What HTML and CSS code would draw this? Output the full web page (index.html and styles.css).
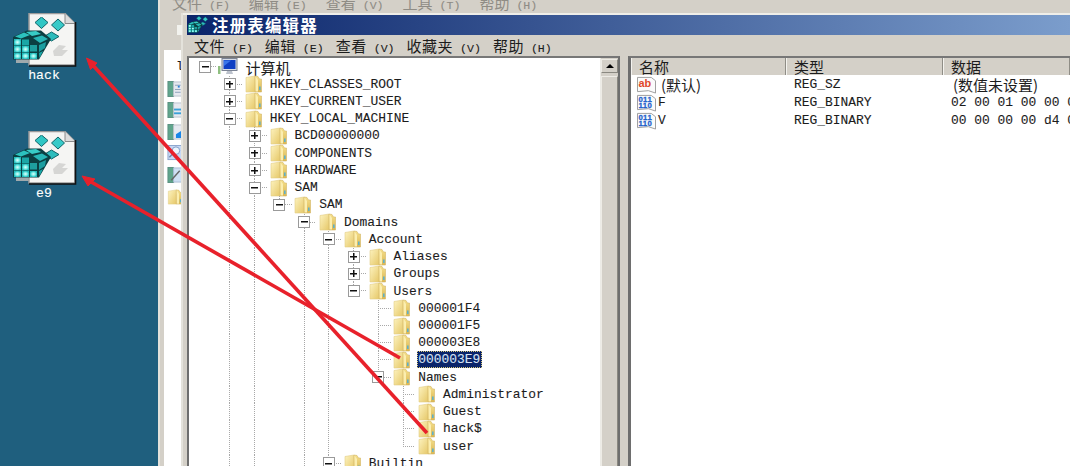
FILE: index.html
```html
<!DOCTYPE html>
<html lang="zh">
<head>
<meta charset="utf-8">
<title>注册表编辑器</title>
<link rel="stylesheet" href="styles.css">
</head>
<body>
<svg class="defs" aria-hidden="true">
  <defs>
    <linearGradient id="fg" x1="0" y1="0" x2="1" y2="1">
      <stop offset="0" stop-color="#fdf3c0"/><stop offset="1" stop-color="#e6c868"/>
    </linearGradient>
    <linearGradient id="fg2" x1="0" y1="0" x2="0" y2="1">
      <stop offset="0" stop-color="#f6e08c"/><stop offset="1" stop-color="#d9b653"/>
    </linearGradient>
    <radialGradient id="cell">
      <stop offset="0" stop-color="#e4fffc"/><stop offset=".6" stop-color="#6fe8e2"/><stop offset="1" stop-color="#22bcbc"/>
    </radialGradient>
    <symbol id="folder" viewBox="0 0 17 18">
      <path d="M1 2.5 L10 1 L10 17 L1 17 Z" fill="url(#fg)" stroke="#e2cd85" stroke-width=".6"/>
      <path d="M10 1 L13 1.5 L14.5 4 L16.5 4 L16.5 17 L10 17 Z" fill="url(#fg2)" stroke="#d3b665" stroke-width=".6"/>
      <path d="M10.5 1.5 L13 5 L13 16.5 L10.5 16.5 Z" fill="#fbeeb0"/>
      <rect x="14" y="11.5" width="1.6" height="3.5" fill="#5fb0c8"/>
    </symbol>
    <symbol id="cubes" viewBox="0 0 52 46">
      <path d="M28.500 0 L35 5.500 L28.500 11.500 L22 5.500 Z" fill="#30c6c4" stroke="#0f6468"/>
      <path d="M45 2 L51.500 8 L45 14 L38.500 8 Z" fill="#38cac8" stroke="#0f6468"/>
      <path d="M38.500 15 L46 19.500 L38.500 24 L31 19.500 Z" fill="#2cbcbc" stroke="#0f6468"/>
      <path d="M0 20 L14 13.500 L28 13.500 L38 22 L26 42.500 L0 42.500 Z" fill="#0b3f42"/>
      <path d="M2 19.500 L11 15.500 L17 18 L8 21.500 Z" fill="#2cc2be"/>
      <path d="M13 15 L23 14 L28 17 L19 19 Z" fill="#38ccc6"/>
      <path d="M20 21 L29 18.500 L35 22 L27 26 Z" fill="#27b6b6"/>
      <rect x="1" y="22" width="7" height="6.500" fill="url(#cell)"/>
      <rect x="9" y="22.500" width="7" height="6" fill="#1ba6a6"/>
      <rect x="1" y="29" width="7" height="6.500" fill="url(#cell)"/>
      <rect x="9" y="29" width="7" height="6.500" fill="url(#cell)"/>
      <rect x="17" y="28" width="7" height="6.500" fill="#1e9e9e"/>
      <rect x="1" y="36" width="7" height="6" fill="url(#cell)"/>
      <rect x="9" y="36" width="7" height="6" fill="url(#cell)"/>
      <rect x="17" y="36" width="7" height="6" fill="url(#cell)"/>
      <path d="M26 28 L33 25 L32 31 L26 35 Z" fill="#1b9ea0"/>
      <path d="M26 36 L30 34 L26.500 41 Z" fill="#1baaaa"/>
    </symbol>
    <symbol id="reg" viewBox="0 0 64 54">
      <path d="M3 46 H17 V50 H3 Z" fill="#9fa9ad"/>
      <path d="M16 .5 H52 L62 10.500 V52 H16 Z" fill="#f5f5f3" stroke="#9a9a9a" stroke-width="1.500"/>
      <path d="M52 .5 V10.500 H62" fill="#dcdcdc" stroke="#8a8a8a"/>
      <path d="M62.500 9 V53 H16" fill="none" stroke="#111" stroke-width="1.600"/>
      <path d="M40 38 L46 32 L53 33 L49 37 L55 37 L49 43 L41 43 Z" fill="#d6d6d4"/>
      <use href="#cubes" x="0" y="4" width="52" height="46"/>
    </symbol>
    <symbol id="computer" viewBox="0 0 20 18">
      <rect x="0" y="8" width="2.500" height="8" fill="#8fbf80"/>
      <rect x="4" y="0.500" width="15" height="12" fill="#d8dde6" stroke="#7c8494"/>
      <rect x="5.500" y="2" width="12" height="9" fill="#0f3fc4"/>
      <path d="M6 2.500 H13 L6 8 Z" fill="#3a76ea"/>
      <path d="M9 13 H14 L15 16 H8 Z" fill="#bcc2cc"/>
    </symbol>
    <symbol id="ab" viewBox="0 0 20 19">
      <path d="M.5 1.500 H15 L19.500 5 V18 L12 15.500 L.5 16.500 Z" fill="#fbfbfb" stroke="#9c9c9c"/>
      <text class="ab-text" x="1.500" y="12">ab</text>
    </symbol>
    <symbol id="bin" viewBox="0 0 20 19">
      <path d="M.5 1.500 H15 L19.500 5 V18 L12 15.500 L.5 16.500 Z" fill="#fbfbfb" stroke="#9c9c9c"/>
      <text class="bin-text" x="1.500" y="8">011</text>
      <text class="bin-text" x="1.500" y="15">110</text>
    </symbol>
    <symbol id="srv1" viewBox="0 0 16 17">
      <rect x=".5" y=".5" width="6" height="16" fill="#5fa58c" stroke="#5a8f80"/>
      <rect x="6.500" y="1" width="9" height="15" fill="#e6e9f0" stroke="#b9c2cc"/>
      <path d="M8 4.500 H14 M8 9 H14 M8 12 H14" stroke="#8aa0b8"/>
      <rect x="11" y="5" width="2" height="2" fill="#2a7ed8"/>
    </symbol>
    <symbol id="srv2" viewBox="0 0 16 17">
      <rect x=".5" y=".5" width="6" height="16" fill="#5fa58c" stroke="#5a8f80"/>
      <rect x="6.500" y="1" width="9" height="15" fill="#e6e9f0" stroke="#b9c2cc"/>
      <rect x="7" y="7" width="8" height="2" fill="#3aa0d8"/>
      <rect x="7" y="11" width="8" height="2" fill="#3aa0d8"/>
    </symbol>
    <symbol id="srv3" viewBox="0 0 16 17">
      <rect x=".5" y=".5" width="6" height="16" fill="#5fa58c" stroke="#5a8f80"/>
      <rect x="6.500" y="1" width="9" height="15" fill="#e6e9f0" stroke="#b9c2cc"/>
      <path d="M9 11 L15 7 V15 H9 Z" fill="#1a86e8"/>
    </symbol>
    <symbol id="srv4" viewBox="0 0 16 17">
      <rect x=".5" y=".5" width="15" height="15" fill="#c6d8f4" stroke="#8aa4cc"/>
      <circle cx="9" cy="6" r="4" fill="#eef4fc" stroke="#7e9cc6"/>
      <path d="M6 9 L2 13" stroke="#6f84a6" stroke-width="1.500"/>
    </symbol>
    <symbol id="srv5" viewBox="0 0 16 17">
      <rect x=".5" y=".5" width="6" height="16" fill="#5fa58c" stroke="#5a8f80"/>
      <rect x="6.500" y="1" width="9" height="15" fill="#cfe0f4" stroke="#a9bcd4"/>
      <path d="M4 14 L13 4" stroke="#666" stroke-width="1.500"/>
    </symbol>
  </defs>
</svg>

<div class="screen">
  <aside class="desktop">
    <div class="deskicon">
      <svg class="regfile"><use href="#reg"/></svg>
      <span class="desklabel">hack</span>
    </div>
    <div class="deskicon">
      <svg class="regfile"><use href="#reg"/></svg>
      <span class="desklabel">e9</span>
    </div>
  </aside>

  <main class="backwin">
    <nav class="backmenu">
      <span class="bm"><span class="zh">文件</span> (F)</span>
      <span class="bm"><span class="zh">编辑</span> (E)</span>
      <span class="bm"><span class="zh">查看</span> (V)</span>
      <span class="bm"><span class="zh">工具</span> (T)</span>
      <span class="bm"><span class="zh">帮助</span> (H)</span>
    </nav>
    <div class="backbody">
      <div class="side">
        <div class="sidetop"><i class="toolglyph"></i></div>
        <div class="sidewhite">
          <span class="sidechar">l</span>
          <svg class="sideico"><use href="#srv1"/></svg>
          <svg class="sideico"><use href="#srv2"/></svg>
          <svg class="sideico"><use href="#srv3"/></svg>
          <svg class="sideico"><use href="#srv4"/></svg>
          <svg class="sideico"><use href="#srv5"/></svg>
          <svg class="sideico"><use href="#folder"/></svg>
        </div>
      </div>

      <section class="regedit">
        <header class="titlebar">
          <svg class="titleico"><use href="#cubes"/></svg>
          <span class="titletext">注册表编辑器</span>
        </header>
        <nav class="menubar">
          <span class="mi"><span class="zh">文件</span> (F)</span>
          <span class="mi"><span class="zh">编辑</span> (E)</span>
          <span class="mi"><span class="zh">查看</span> (V)</span>
          <span class="mi"><span class="zh">收藏夹</span> (V)</span>
          <span class="mi"><span class="zh">帮助</span> (H)</span>
        </nav>
        <div class="panes">
          <div class="treebox">
            <div class="tree">
              <div class="row"><i class="c h"><b class="x m"></b></i><svg class="ico comp"><use href="#computer"/></svg><span class="lbl root zh">计算机</span></div>
              <div class="row"><i class="c"></i><i class="c t"><b class="x p"></b></i><svg class="ico"><use href="#folder"/></svg><span class="lbl">HKEY_CLASSES_ROOT</span></div>
              <div class="row"><i class="c"></i><i class="c t"><b class="x p"></b></i><svg class="ico"><use href="#folder"/></svg><span class="lbl">HKEY_CURRENT_USER</span></div>
              <div class="row"><i class="c"></i><i class="c t"><b class="x m"></b></i><svg class="ico"><use href="#folder"/></svg><span class="lbl">HKEY_LOCAL_MACHINE</span></div>
              <div class="row"><i class="c"></i><i class="c v"></i><i class="c t"><b class="x p"></b></i><svg class="ico"><use href="#folder"/></svg><span class="lbl">BCD00000000</span></div>
              <div class="row"><i class="c"></i><i class="c v"></i><i class="c t"><b class="x p"></b></i><svg class="ico"><use href="#folder"/></svg><span class="lbl">COMPONENTS</span></div>
              <div class="row"><i class="c"></i><i class="c v"></i><i class="c t"><b class="x p"></b></i><svg class="ico"><use href="#folder"/></svg><span class="lbl">HARDWARE</span></div>
              <div class="row"><i class="c"></i><i class="c v"></i><i class="c t"><b class="x m"></b></i><svg class="ico"><use href="#folder"/></svg><span class="lbl">SAM</span></div>
              <div class="row"><i class="c"></i><i class="c v"></i><i class="c v"></i><i class="c l"><b class="x m"></b></i><svg class="ico"><use href="#folder"/></svg><span class="lbl">SAM</span></div>
              <div class="row"><i class="c"></i><i class="c v"></i><i class="c v"></i><i class="c"></i><i class="c t"><b class="x m"></b></i><svg class="ico"><use href="#folder"/></svg><span class="lbl">Domains</span></div>
              <div class="row"><i class="c"></i><i class="c v"></i><i class="c v"></i><i class="c"></i><i class="c v"></i><i class="c t"><b class="x m"></b></i><svg class="ico"><use href="#folder"/></svg><span class="lbl">Account</span></div>
              <div class="row"><i class="c"></i><i class="c v"></i><i class="c v"></i><i class="c"></i><i class="c v"></i><i class="c v"></i><i class="c t"><b class="x p"></b></i><svg class="ico"><use href="#folder"/></svg><span class="lbl">Aliases</span></div>
              <div class="row"><i class="c"></i><i class="c v"></i><i class="c v"></i><i class="c"></i><i class="c v"></i><i class="c v"></i><i class="c t"><b class="x p"></b></i><svg class="ico"><use href="#folder"/></svg><span class="lbl">Groups</span></div>
              <div class="row"><i class="c"></i><i class="c v"></i><i class="c v"></i><i class="c"></i><i class="c v"></i><i class="c v"></i><i class="c l"><b class="x m"></b></i><svg class="ico"><use href="#folder"/></svg><span class="lbl">Users</span></div>
              <div class="row"><i class="c"></i><i class="c v"></i><i class="c v"></i><i class="c"></i><i class="c v"></i><i class="c v"></i><i class="c"></i><i class="c t"></i><svg class="ico"><use href="#folder"/></svg><span class="lbl">000001F4</span></div>
              <div class="row"><i class="c"></i><i class="c v"></i><i class="c v"></i><i class="c"></i><i class="c v"></i><i class="c v"></i><i class="c"></i><i class="c t"></i><svg class="ico"><use href="#folder"/></svg><span class="lbl">000001F5</span></div>
              <div class="row"><i class="c"></i><i class="c v"></i><i class="c v"></i><i class="c"></i><i class="c v"></i><i class="c v"></i><i class="c"></i><i class="c t"></i><svg class="ico"><use href="#folder"/></svg><span class="lbl">000003E8</span></div>
              <div class="row"><i class="c"></i><i class="c v"></i><i class="c v"></i><i class="c"></i><i class="c v"></i><i class="c v"></i><i class="c"></i><i class="c t"></i><svg class="ico"><use href="#folder"/></svg><span class="lbl selected">000003E9</span></div>
              <div class="row"><i class="c"></i><i class="c v"></i><i class="c v"></i><i class="c"></i><i class="c v"></i><i class="c v"></i><i class="c"></i><i class="c l"><b class="x m"></b></i><svg class="ico"><use href="#folder"/></svg><span class="lbl">Names</span></div>
              <div class="row"><i class="c"></i><i class="c v"></i><i class="c v"></i><i class="c"></i><i class="c v"></i><i class="c v"></i><i class="c"></i><i class="c"></i><i class="c t"></i><svg class="ico"><use href="#folder"/></svg><span class="lbl">Administrator</span></div>
              <div class="row"><i class="c"></i><i class="c v"></i><i class="c v"></i><i class="c"></i><i class="c v"></i><i class="c v"></i><i class="c"></i><i class="c"></i><i class="c t"></i><svg class="ico"><use href="#folder"/></svg><span class="lbl">Guest</span></div>
              <div class="row"><i class="c"></i><i class="c v"></i><i class="c v"></i><i class="c"></i><i class="c v"></i><i class="c v"></i><i class="c"></i><i class="c"></i><i class="c t"></i><svg class="ico"><use href="#folder"/></svg><span class="lbl">hack$</span></div>
              <div class="row"><i class="c"></i><i class="c v"></i><i class="c v"></i><i class="c"></i><i class="c v"></i><i class="c v"></i><i class="c"></i><i class="c"></i><i class="c l"></i><svg class="ico"><use href="#folder"/></svg><span class="lbl">user</span></div>
              <div class="row"><i class="c"></i><i class="c v"></i><i class="c v"></i><i class="c"></i><i class="c v"></i><i class="c t"><b class="x m"></b></i><svg class="ico"><use href="#folder"/></svg><span class="lbl">Builtin</span></div>
            </div>
            <div class="vscroll">
              <div class="upbtn"><i class="uptri"></i></div>
              <div class="thumb"></div>
            </div>
          </div>
          <div class="splitter"></div>
          <div class="list">
            <div class="listhead">
              <span class="th zh">名称</span>
              <span class="th zh">类型</span>
              <span class="th zh">数据</span>
            </div>
            <div class="lrow">
              <span class="cell name"><svg class="vico"><use href="#ab"/></svg><span class="zh vname">(默认)</span></span>
              <span class="cell">REG_SZ</span>
              <span class="cell zh dataset">(数值未设置)</span>
            </div>
            <div class="lrow">
              <span class="cell name"><svg class="vico"><use href="#bin"/></svg><span class="vshort">F</span></span>
              <span class="cell">REG_BINARY</span>
              <span class="cell">02 00 01 00 00 00 00 00</span>
            </div>
            <div class="lrow">
              <span class="cell name"><svg class="vico"><use href="#bin"/></svg><span class="vshort">V</span></span>
              <span class="cell">REG_BINARY</span>
              <span class="cell">00 00 00 00 d4 00 00 00</span>
            </div>
          </div>
        </div>
      </section>
    </div>
  </main>

  <svg class="arrows" viewBox="0 0 1070 466" aria-hidden="true">
    <path class="shaft" d="M90 62 L427 433"/>
    <path class="head" d="M86.500 58 L97 63 L90.500 69.500 Z"/>
    <path class="shaft" d="M86 179 L400 358"/>
    <path class="head" d="M82 176 L95 179 L88 186 Z"/>
  </svg>
</div>
</body>
</html>
```

FILE: styles.css
```css
* { box-sizing: border-box; }
html, body { margin: 0; padding: 0; }
body { width: 1070px; height: 466px; overflow: hidden; background: #1f5f7e; }
.defs { width: 0; height: 0; display: block; overflow: hidden; }

.screen {
  position: relative;
  display: flex;
  width: 1070px;
  height: 466px;
  overflow: hidden;
  font-family: "Liberation Mono", "Noto Sans CJK SC", monospace;
  font-size: 12.93px;
  color: #1c1c1c;
  -webkit-text-stroke: .1px currentColor;
}
.zh { font-family: "Noto Sans CJK SC", "Liberation Mono", sans-serif; font-size: 15px; -webkit-text-stroke: 0; }

/* desktop */
.desktop {
  flex: none;
  width: 158px;
  background: #1f5f7e;
  padding: 13px 0 0 13px;
  display: flex;
  flex-direction: column;
  gap: 48px;
}
.deskicon { display: flex; flex-direction: column; align-items: flex-start; width: 64px; }
.regfile { width: 64px; height: 54px; display: block; }
.desklabel {
  width: 62px;
  text-align: center;
  color: #fff;
  font-size: 13.2px;
  line-height: 15px;
  margin-top: 1px;
}

/* window behind */
.backwin {
  flex: 1;
  min-width: 0;
  background: #d4d0c8;
  border-left: 2px solid #e4e2db;
  display: flex;
  flex-direction: column;
}
.backmenu {
  flex: none;
  height: 13px;
  padding-left: 12px;
  display: flex;
  gap: 19px;
  overflow: hidden;
  color: #8f8c85;
  font-size: 11.6px;
}
.bm { margin-top: -7px; line-height: 20px; white-space: nowrap; }
.backbody { flex: 1; display: flex; min-height: 0; }

.side {
  flex: none;
  width: 23px;
  padding-left: 4px;
  display: flex;
  flex-direction: column;
  border-right: 2px solid #e4e2db;
}
.sidetop { flex: none; height: 37px; padding: 12px 0 0 13px; }
.toolglyph { display: block; width: 5px; height: 10px; background: #f2f2ee; }
.sidewhite {
  flex: 1;
  background: #fff;
  padding: 8px 0 0 3px;
  display: flex;
  flex-direction: column;
  gap: 5.6px;
  overflow: hidden;
}
.sidechar { height: 17px; line-height: 17px; padding-left: 9px; font-size: 13px; }
.sideico { flex: none; width: 16px; height: 16px; display: block; }

/* registry editor */
.regedit {
  flex: 1;
  min-width: 0;
  display: flex;
  flex-direction: column;
  background: #d4d0c8;
  border-top: 2px solid #efeee9;
  padding-left: 4px;
}
.titlebar {
  flex: none;
  height: 20px;
  display: flex;
  align-items: center;
  background: linear-gradient(90deg, #0a246a 0, #7b9dcc 100%);
  padding-left: 1px;
}
.titleico { width: 20px; height: 18px; flex: none; }
.titletext {
  margin-left: 4px;
  color: #fff;
  font-family: "Noto Sans CJK SC", sans-serif;
  font-weight: 700;
  font-size: 16.5px;
  letter-spacing: 1.15px;
  line-height: 20px;
  -webkit-text-stroke: 0;
}
.menubar {
  flex: none;
  height: 21px;
  padding-left: 7px;
  display: flex;
  align-items: center;
  gap: 12px;
  font-size: 11.6px;
  white-space: nowrap;
}
.menubar .zh { letter-spacing: .5px; }

.panes { flex: 1; display: flex; min-height: 0; }
.treebox {
  flex: none;
  width: 433px;
  display: flex;
  background: #fff;
  border-left: 2px solid #6e6e6e;
  border-top: 2px solid #777;
  border-right: 2px solid #6e6e6e;
}
.tree {
  flex: 1;
  min-width: 0;
  padding: .4px 0 0 3.65px;
  overflow: hidden;
}
.row { height: 17.24px; display: flex; align-items: center; white-space: nowrap; }
.c {
  flex: none;
  width: 24.75px;
  height: 100%;
  display: flex;
  align-items: center;
  justify-content: center;
  background-repeat: no-repeat;
}
.v {
  background-image: repeating-linear-gradient(to bottom, #a8a8a8 0 1px, transparent 1px 2px);
  background-size: 1px 100%;
  background-position: 12px 0;
}
.t, .l, .h {
  background-image:
    repeating-linear-gradient(to bottom, #a8a8a8 0 1px, transparent 1px 2px),
    repeating-linear-gradient(to right, #a8a8a8 0 1px, transparent 1px 2px);
  background-size: 1px 100%, 13px 1px;
  background-position: 12px 0, 12px 8px;
}
.l { background-size: 1px 50%, 13px 1px; }
.h { background-size: 0 0, 13px 1px; }
.x {
  display: block;
  width: 12px;
  height: 12px;
  border: 1.500px solid #9a9a9a;
  background-color: #fff;
  background-repeat: no-repeat;
  background-position: center;
}
.m { background-image: linear-gradient(#111, #111); background-size: 7px 1.500px; }
.p {
  background-image: linear-gradient(#111, #111), linear-gradient(#111, #111);
  background-size: 7px 1.500px, 1.500px 7px;
}
.ico { flex: none; width: 17px; height: 18px; margin-left: 2.650px; display: block; }
.comp { width: 20px; height: 18px; margin-left: 1px; }
.lbl { margin-left: 8px; line-height: 16px; padding-top: 1px; }
.root { margin-left: 7px; letter-spacing: 0; padding-top: 0; line-height: 17px; }
.selected {
  margin-left: 7px;
  padding: 1px 2px 0 1px;
  background: #0a246a;
  color: #d6e2f4;
  outline: 1px dotted #d8c878;
  outline-offset: -1px;
}

.vscroll {
  flex: none;
  width: 18px;
  display: flex;
  flex-direction: column;
  background: #d4d0c8;
  border-left: 1px solid #ecebe6;
  padding-top: 1px;
}
.upbtn {
  flex: none;
  height: 14px;
  display: flex;
  align-items: center;
  justify-content: center;
  background: #d4d0c8;
  border: 1px solid #eeece6;
  border-right-color: #8a8880;
  border-bottom-color: #8a8880;
}
.uptri {
  width: 0;
  height: 0;
  border-left: 4px solid transparent;
  border-right: 4px solid transparent;
  border-bottom: 4px solid #000;
}
.thumb {
  flex: 1;
  margin-top: 3px;
  background: #d4d0c8;
  border: 1px solid #eeece6;
  border-right-color: #8a8880;
  border-bottom: 0;
}
.splitter { flex: none; width: 8px; }
.list {
  flex: 1;
  min-width: 0;
  background: #fff;
  border-left: 3px solid #6e6e6e;
  border-top: 2px solid #777;
  overflow: hidden;
}
.listhead {
  height: 17px;
  display: grid;
  grid-template-columns: 155px 157px 1fr;
  background: #d4d0c8;
  overflow: hidden;
}
.th {
  padding-left: 8px;
  line-height: 17px;
  height: 17px;
  border-right: 1px solid #8f8d86;
  box-shadow: inset 1px 0 0 #f4f3ef;
}
.lrow {
  height: 18px;
  display: grid;
  grid-template-columns: 155px 157px 1fr;
  align-items: center;
  white-space: nowrap;
}
.listhead + .lrow { margin-top: 1px; }
.cell { padding-left: 8px; line-height: 18px; min-width: 0; overflow: hidden; }
.cell.name { padding-left: 5px; display: flex; align-items: center; }
.dataset { padding-left: 10px; }
.vico { flex: none; width: 21px; height: 18px; display: block; }
.vname { margin-left: 4px; }
.vshort { margin-left: 1px; }
.ab-text { font: 700 11.5px "Liberation Sans", sans-serif; fill: #e0492a; stroke: none; }
.bin-text { font: 700 8.200px "Liberation Sans", sans-serif; fill: #1f62cc; letter-spacing: .4px; stroke: #1f62cc; stroke-width: .3px; }

/* annotation arrows over the screenshot */
.arrows { position: absolute; left: 0; top: 0; width: 1070px; height: 466px; pointer-events: none; }
.shaft { fill: none; stroke: #e8212b; stroke-width: 3.6; }
.head { fill: #e8212b; stroke: #e8212b; stroke-width: 1; }
```
